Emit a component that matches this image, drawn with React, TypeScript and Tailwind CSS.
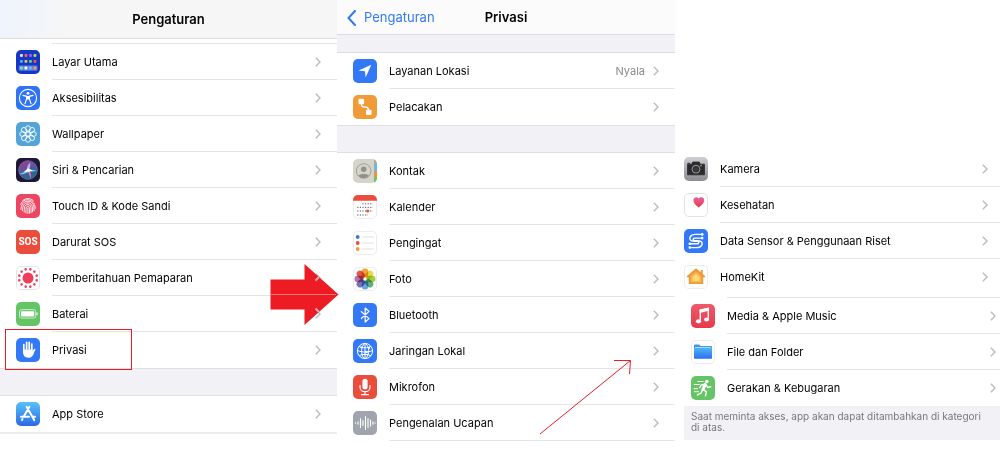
import type { ReactNode } from "react";

function Tile({ className, children }: { className: string; children?: ReactNode }) {
  return (
    <span
      className={`flex h-6 w-6 shrink-0 items-center justify-center overflow-hidden rounded-[5px] ${className}`}
    >
      {children}
    </span>
  );
}

function Glyph({ children }: { children: ReactNode }) {
  return (
    <svg className="h-6 w-6 shrink-0" viewBox="0 0 24 24" fill="none" aria-hidden="true">
      {children}
    </svg>
  );
}

function Chevron() {
  return (
    <svg className="h-[10px] w-[6px] shrink-0" viewBox="0 0 6 10" fill="none" aria-hidden="true">
      <path d="M0.8 0.7 5 5 0.8 9.3" stroke="#bcbcc0" strokeWidth="1.4" />
    </svg>
  );
}

const homeDots = [
  ["#e8e3dc", "#f0645a", "#a45cf0", "#b9d84a"],
  ["#4db4f5", "#f5c33c", "#5fd67e", "#f05a3c"],
  ["#7fe08a", "#ffffff", "#5cc3f5", "#f59a4a"],
];

function HomeScreenIcon() {
  return (
    <Tile className="bg-[#1437c8]">
      <Glyph>
        <rect x="2.8" y="15.6" width="18.6" height="5.2" rx="1.2" fill="#5f7fe8" />
        {homeDots.map((row, y) =>
          row.map((color, x) => (
            <rect
              key={`${x}-${y}`}
              x={4 + x * 4.5}
              y={4 + y * 6.3 - (y === 1 ? 0.4 : 0)}
              width="2.9"
              height="2.9"
              rx="0.8"
              fill={color}
            />
          ))
        )}
      </Glyph>
    </Tile>
  );
}

function AccessibilityIcon() {
  return (
    <Tile className="bg-[#2f73f6]">
      <Glyph>
        <circle cx="12" cy="12" r="8.6" stroke="#fff" strokeWidth="1.1" />
        <circle cx="12" cy="7.3" r="1.4" fill="#fff" />
        <path
          d="M7 9.4 10.6 10.3V13L9 17.6M17 9.4 13.4 10.3V13L15 17.6"
          stroke="#fff"
          strokeWidth="1.2"
          strokeLinecap="round"
        />
        <path d="M10.4 10h3.2v3.6h-3.2z" fill="#fff" />
      </Glyph>
    </Tile>
  );
}

const eighths = [0, 45, 90, 135, 180, 225, 270, 315];

function WallpaperIcon() {
  return (
    <Tile className="bg-[#53a5d9]">
      <Glyph>
        <circle cx="12" cy="12" r="2.2" stroke="#fff" strokeWidth="1" />
        {eighths.map((a) => (
          <ellipse
            key={a}
            cx="12"
            cy="6.6"
            rx="2.4"
            ry="2.9"
            stroke="#fff"
            strokeWidth="0.9"
            transform={`rotate(${a} 12 12)`}
          />
        ))}
      </Glyph>
    </Tile>
  );
}

function SiriIcon() {
  return (
    <Tile className="bg-[#1d1738]">
      <Glyph>
        <defs>
          <linearGradient id="siri" x1="7" y1="4" x2="15" y2="20" gradientUnits="userSpaceOnUse">
            <stop stopColor="#a03a86" />
            <stop offset="0.45" stopColor="#5a55a8" />
            <stop offset="1" stopColor="#156f86" />
          </linearGradient>
        </defs>
        <circle cx="12" cy="12" r="9.3" fill="url(#siri)" stroke="#77719c" strokeWidth="0.8" />
        <path d="M3.400 15.800C7 15.300 9.500 13 12 11.200c2.500.6 5.300 1.200 8.300 1.400-3 1.400-5.600 1-7.300.8-3 1.400-6.500 4-9.600 2.400z" fill="#6fe6e6" />
        <path d="M11 12c-.3-2.500.6-5.500 3.300-7.500.3 3-.6 5.500-1.300 7.500z" fill="#b9b4e6" />
        <path d="M11.300 12.400c1.200 2.500 2.400 5 3.400 8 .9-2.400.1-5.500-1.400-8.200z" fill="#f06cc0" />
        <path d="M8 13.800 12 10.200l4.500 2.300-3.800 1.300z" fill="#fff" />
      </Glyph>
    </Tile>
  );
}

function TouchIdIcon() {
  return (
    <Tile className="bg-[#ee4560]">
      <Glyph>
        <g stroke="#fff" strokeWidth="0.9" strokeLinecap="round">
          <path d="M6.600 6.800C9.600 3.700 14.400 3.700 17.400 6.800" />
          <path d="M4.700 10.300C6.500 5.700 12 4.500 15.800 7.200c2.400 1.700 3.500 4.200 3.500 7.300" />
          <path d="M4.900 15.500c.4-4.700 2-8.200 7.100-8.200 4 0 6 3.200 6 7.500v1.900" />
          <path d="M6.500 16.800C6.500 12 7.700 8.900 12 8.900c3.200 0 4.500 2.600 4.500 6.100v2.900" />
          <path d="M8.200 18c.3-3.800-.3-7.400 3.800-7.400 2.400 0 3 2 3 4.600v3.500" />
          <path d="M9.900 19c.3-3.500-.3-6.700 2.100-6.700 1.400 0 1.500 1.400 1.500 3.100v3.900" />
          <path d="M11.900 14v5.500" />
        </g>
      </Glyph>
    </Tile>
  );
}

function SosIcon() {
  return (
    <Tile className="bg-[#eb4d3d]">
      <span className="font-['Roboto',sans-serif] text-[10px] leading-3 font-bold text-white">
        SOS
      </span>
    </Tile>
  );
}

function ExposureIcon() {
  return (
    <Tile className="bg-white ring-1 ring-[#e6e6e8] ring-inset">
      <Glyph>
        <circle cx="12" cy="12" r="5.5" fill="#eb3f5b" />
        {[15, 45, 75, 105, 135, 165, 195, 225, 255, 285, 315, 345].map((a) => (
          <circle key={a} cx="12" cy="3" r="1.3" fill="#eb3f5b" transform={`rotate(${a} 12 12)`} />
        ))}
      </Glyph>
    </Tile>
  );
}

function BatteryIcon() {
  return (
    <Tile className="bg-[#65c466]">
      <Glyph>
        <rect x="3.5" y="7.7" width="16.2" height="8.4" rx="2" stroke="#d9f2d9" strokeWidth="0.9" />
        <rect x="5" y="9.2" width="13.2" height="5.4" rx="0.8" fill="#fff" />
        <path d="M21 10.500v2.800" stroke="#fff" strokeWidth="1.1" />
      </Glyph>
    </Tile>
  );
}

function HandIcon() {
  return (
    <Tile className="bg-[#3378f6]">
      <Glyph>
        <g stroke="#fff" strokeWidth="1.7" strokeLinecap="round">
          <path d="M7.800 13V6.500M10.600 11V4.300M13.200 11V4.300M15.800 12V6.200M18.700 11.600 16 15.500" />
        </g>
        <path d="M7 11.500h9.600v2.700l1.800-.8c-.8 3.600-2.400 6.400-6.200 6.400-3.700 0-5.200-2.800-5.200-6z" fill="#fff" />
      </Glyph>
    </Tile>
  );
}

function AppStoreIcon() {
  return (
    <Tile className="bg-linear-to-b from-[#5bc1f8] to-[#2e68e3]">
      <Glyph>
        <g stroke="#fff" strokeWidth="2" strokeLinecap="round">
          <path d="M13.300 4.900 7.600 14.700M10.700 4.900l6.700 11.700M5 14.700h8M16.600 14.700H19M6.500 17.100l-.5.900M17.700 17.300l.5.800" />
        </g>
      </Glyph>
    </Tile>
  );
}

function LocationIcon() {
  return (
    <Tile className="bg-[#3378f6]">
      <Glyph>
        <path d="M18.300 5.700 12.600 18.600 12 12.300 5.500 11.600z" fill="#fff" />
      </Glyph>
    </Tile>
  );
}

function TrackingIcon() {
  return (
    <Tile className="bg-[#f09a38]">
      <Glyph>
        <rect x="5.5" y="3.8" width="5.6" height="5.4" rx="1" fill="#fff" />
        <rect x="13" y="14.7" width="5.6" height="5.4" rx="1" fill="#fff" />
        <path d="M8.500 9c0 2.500.5 3 3 3s4 .4 4 3" stroke="#fff" strokeWidth="1.4" />
      </Glyph>
    </Tile>
  );
}

function ContactsIcon() {
  return (
    <Tile className="bg-[#d5d4c9]">
      <Glyph>
        <path d="M21 0h3v6h-3z" fill="#a9a79e" />
        <path d="M21 6h3v6h-3z" fill="#62b9f2" />
        <path d="M21 12h3v6h-3z" fill="#f0913a" />
        <path d="M21 18h3v6h-3z" fill="#61c95f" />
        <circle cx="10.7" cy="12" r="7.3" stroke="#9c9a93" strokeWidth="0.9" />
        <circle cx="10.7" cy="10.2" r="2.7" fill="#94918b" />
        <path d="M5.500 16.700c1-2.300 9.400-2.300 10.400 0-2.300 3.200-8.100 3.200-10.400 0z" fill="#94918b" />
      </Glyph>
    </Tile>
  );
}

function CalendarIcon() {
  return (
    <Tile className="bg-white ring-1 ring-[#ececee] ring-inset">
      <Glyph>
        <path d="M0 0h24v5.700H0z" fill="#eb4d3d" />
        <g stroke="#55555a" strokeWidth="1" strokeDasharray="1.2 1.4">
          <path d="M9.400 8.800H20M4.200 12.300H20M4.200 16H20M4.200 20H15" />
        </g>
        <circle cx="14.7" cy="16" r="1.6" fill="#eb4d3d" />
      </Glyph>
    </Tile>
  );
}

function RemindersIcon() {
  return (
    <Tile className="bg-white ring-1 ring-[#ececee] ring-inset">
      <Glyph>
        <path d="M9 6h12M9 12h12M9 18h12" stroke="#dededf" strokeWidth="0.9" />
        <circle cx="4.7" cy="6" r="1.9" fill="#3378f6" />
        <circle cx="4.7" cy="12" r="1.9" fill="#eb4d3d" />
        <circle cx="4.7" cy="18" r="1.9" fill="#f09a38" />
      </Glyph>
    </Tile>
  );
}

const petals = [
  "#f2a13a",
  "#e5dc3f",
  "#a9cc4e",
  "#62b08a",
  "#6ba3dc",
  "#7c72b8",
  "#b673a8",
  "#e0574b",
];

function PhotosIcon() {
  return (
    <Tile className="bg-white ring-1 ring-[#ececee] ring-inset">
      <Glyph>
        {petals.map((color, i) => (
          <rect
            key={color}
            x="8.7"
            y="1.5"
            width="6.6"
            height="9"
            rx="3.3"
            fill={color}
            className="mix-blend-multiply"
            transform={`rotate(${i * 45} 12 12)`}
          />
        ))}
      </Glyph>
    </Tile>
  );
}

function BluetoothIcon() {
  return (
    <Tile className="bg-[#3378f6]">
      <Glyph>
        <path
          d="M8 8.300 16 15.600 12.200 19V5l3.800 3.400L8 15.700"
          stroke="#fff"
          strokeWidth="1.2"
          strokeLinejoin="round"
        />
      </Glyph>
    </Tile>
  );
}

function GlobeIcon() {
  return (
    <Tile className="bg-[#3378f6]">
      <Glyph>
        <g stroke="#fff" strokeWidth="1">
          <circle cx="12" cy="12" r="7.6" />
          <path d="M4.400 11.500C9 13.500 15 13.500 19.600 11.500M6 7.300c4 2 8 2 12 0M6 16.700c4-1.800 8-1.800 12 0" />
          <path d="M11.500 4.400C8 8 7.500 15 11 19.500M12.500 4.400c4 3.600 4.500 10.600 0 15.200M12 4.400v15.200" />
        </g>
        <circle cx="13.5" cy="13" r="1.3" fill="#fff" />
        <circle cx="8.5" cy="8.5" r="1.1" fill="#fff" />
        <circle cx="16" cy="9" r="1.1" fill="#fff" />
      </Glyph>
    </Tile>
  );
}

function MicIcon() {
  return (
    <Tile className="bg-[#eb4d3d]">
      <Glyph>
        <rect x="9.4" y="3.7" width="5.2" height="10.6" rx="2.6" fill="#fff" />
        <path
          d="M7 10.500v1.700c0 6 10 6 10 0v-1.700M12 16.700v3M8.500 19.700h7"
          stroke="#fff"
          strokeWidth="1.2"
          strokeLinecap="round"
        />
      </Glyph>
    </Tile>
  );
}

function SpeechIcon() {
  return (
    <Tile className="bg-[#9fa4ae]">
      <Glyph>
        <path
          d="M2.500 11.700v.6M5 10.700v2.600M7.500 7.500v9M10 9.500v5M12.500 5.500v13M15 7.500v9M17.500 9v6M20 10.700v2.600M22 11.700v.6"
          stroke="#fff"
          strokeWidth="1.1"
          strokeLinecap="round"
        />
      </Glyph>
    </Tile>
  );
}

function CameraIcon() {
  return (
    <Tile className="bg-linear-to-b from-[#cfcfd3] to-[#8c8c91]">
      <Glyph>
        <path
          d="M3.500 7.200h4.300l.9-2.200h6.600l.9 2.200h4.300v10.600h-17z"
          fill="#2b2b2d"
          stroke="#2b2b2d"
          strokeWidth="0.8"
          strokeLinejoin="round"
        />
        <path d="M3.500 6.300h2.700" stroke="#2b2b2d" />
        <circle cx="12" cy="12.2" r="3.9" stroke="#a9a9ac" strokeWidth="0.9" />
        <circle cx="12" cy="12.2" r="2.2" fill="#3a3a3e" />
        <circle cx="17" cy="8.7" r="0.8" fill="#e3b341" />
      </Glyph>
    </Tile>
  );
}

function HealthIcon() {
  return (
    <Tile className="bg-white ring-1 ring-[#e3e3e6] ring-inset">
      <Glyph>
        <defs>
          <linearGradient id="heart" x1="0" y1="4" x2="0" y2="15" gradientUnits="userSpaceOnUse">
            <stop stopColor="#e85fa8" />
            <stop offset="1" stopColor="#ee3a3a" />
          </linearGradient>
        </defs>
        <path
          d="M14.700 14.600C11.500 12 9.400 10.200 9.400 7.300c0-3.300 3.900-4.200 5.300-1.700 1.400-2.500 5.500-1.600 5.500 1.700 0 2.900-2.300 4.700-5.500 7.300z"
          fill="url(#heart)"
        />
      </Glyph>
    </Tile>
  );
}

function SensorIcon() {
  return (
    <Tile className="bg-[#3378f6]">
      <Glyph>
        <g stroke="#fff" strokeWidth="1.4" strokeLinecap="round">
          <path d="M17.800 5.400H11C6.300 5.400 4.200 10 7.200 11.600c1.300.7 4.300.5 6.300.7 1.800.2 1.800 2.400 0 2.500H5.800" />
          <path d="M6.200 18.600H13c4.700 0 6.800-4.600 3.800-6.200-1.300-.7-4.300-.5-6.300-.7-1.800-.2-1.800-2.500 0-2.600h7.700" />
        </g>
        <circle cx="18.2" cy="5.4" r="1.3" fill="#fff" />
        <circle cx="18.2" cy="9.1" r="1.3" fill="#fff" />
        <circle cx="5.8" cy="18.6" r="1.3" fill="#fff" />
        <circle cx="5.8" cy="14.8" r="1.3" fill="#fff" />
      </Glyph>
    </Tile>
  );
}

function HomeKitIcon() {
  return (
    <Tile className="bg-white ring-1 ring-[#ececee] ring-inset">
      <Glyph>
        <path d="M16.700 5h2v5h-2z" fill="#f09a38" />
        <path d="M12 3.200 21 11v1.200h-1.800V19H4.800v-6.800H3V11z" fill="#ee9838" />
        <path d="M12 6.400 17.300 11v6.600H6.700V11z" fill="#f5b84d" />
        <path d="M12 9 15.300 12v4H8.700v-4z" fill="#f9d97a" />
      </Glyph>
    </Tile>
  );
}

function MusicIcon() {
  return (
    <Tile className="bg-linear-to-b from-[#ee5a6b] to-[#e5394a]">
      <Glyph>
        <path d="M9.300 16V6.300l8-1.800v9.800" stroke="#fff" strokeWidth="1.4" />
        <path d="M8.600 5.600 18 3.600v3.200L8.600 8.900z" fill="#fff" />
        <ellipse cx="7.5" cy="17.3" rx="2.6" ry="2.1" fill="#fff" />
        <ellipse cx="15.6" cy="15.5" rx="2.5" ry="2.1" fill="#fff" />
      </Glyph>
    </Tile>
  );
}

function FilesIcon() {
  return (
    <Tile className="bg-white ring-1 ring-[#ececee] ring-inset">
      <Glyph>
        <defs>
          <linearGradient id="folder" x1="0" y1="7" x2="0" y2="19" gradientUnits="userSpaceOnUse">
            <stop stopColor="#55b9f7" />
            <stop offset="1" stopColor="#2a6ff0" />
          </linearGradient>
        </defs>
        <path d="M3 5.500c0-.6.300-.9.900-.9h4.300l1.400 1.400H20c.700 0 1 .300 1 1V10H3z" fill="#3a9ce8" />
        <path d="M4 7h16v2H4z" fill="#a5dbfa" />
        <path d="M3 8h18v9.800c0 .700-.300 1-1 1H4c-.700 0-1-.300-1-1z" fill="url(#folder)" />
      </Glyph>
    </Tile>
  );
}

function FitnessIcon() {
  return (
    <Tile className="bg-[#65c466]">
      <Glyph>
        <circle cx="15.8" cy="5.5" r="1.8" fill="#fff" />
        <path d="M14.200 8.500 12 13.300" stroke="#fff" strokeWidth="3" strokeLinecap="round" />
        <path
          d="M14 8.300 10.200 9 8.800 11.500M15 9l1.800 2.500 2.900-.8M12.300 13.500l3 2.300-.8 4M11.600 13.500l-1.600 3.600-3.600 1.800"
          stroke="#fff"
          strokeWidth="1.5"
          strokeLinecap="round"
          strokeLinejoin="round"
        />
        <path
          d="M7 5.500h5M3.200 8.500h5M3 12.700h3.500M3.500 15.700h4"
          stroke="#fff"
          strokeWidth="1"
          strokeLinecap="round"
        />
      </Glyph>
    </Tile>
  );
}

type RowProps = {
  icon: ReactNode;
  label: string;
  value?: string;
  inset?: string;
  end?: string;
  line?: boolean;
};

function Row({ icon, label, value, inset = "pl-4", end = "pr-4", line = true }: RowProps) {
  return (
    <li>
      <a href="#" className={`flex h-9 items-center gap-3 ${inset}`}>
        {icon}
        <span
          className={`flex h-full flex-1 items-center justify-between border-b ${end} ${
            line ? "border-[#e4e4e6]" : "border-transparent"
          }`}
        >
          <span className="pt-0.5 whitespace-nowrap">{label}</span>
          <span className="flex items-center gap-2 text-[#8a8a8e]">
            {value && <span className="pt-0.5">{value}</span>}
            <Chevron />
          </span>
        </span>
      </a>
    </li>
  );
}

function SettingsPanel() {
  return (
    <section className="relative" aria-label="Pengaturan">
      <header className="flex h-[39px] items-center justify-center border-b border-[#dcdcde] bg-linear-to-r from-[#eef4fc] to-[#f6f6f6] to-20% pt-0.5">
        <h1 className="text-[13px] font-semibold">Pengaturan</h1>
      </header>
      <div className="ml-[52px] h-[5px] border-b border-[#e4e4e6]" />
      <ul>
        <Row icon={<HomeScreenIcon />} label="Layar Utama" />
        <Row icon={<AccessibilityIcon />} label="Aksesibilitas" />
        <Row icon={<WallpaperIcon />} label="Wallpaper" />
        <Row icon={<SiriIcon />} label="Siri & Pencarian" />
        <Row icon={<TouchIdIcon />} label="Touch ID & Kode Sandi" />
        <Row icon={<SosIcon />} label="Darurat SOS" />
        <Row icon={<ExposureIcon />} label="Pemberitahuan Pemaparan" />
        <Row icon={<BatteryIcon />} label="Baterai" />
        <Row icon={<HandIcon />} label="Privasi" line={false} />
      </ul>
      <div className="h-7 border-y border-[#e0e0e4] bg-[#f1f1f6]" />
      <ul>
        <Row icon={<AppStoreIcon />} label="App Store" line={false} />
      </ul>
      <div className="h-[2px] bg-[#ededf1]" />

      {/* highlight around the Privasi row */}
      <div className="absolute top-[329px] left-[5px] h-[41px] w-[127px] ring-1 ring-[#ed1c24] ring-inset" />

      {/* step arrow to the next panel */}
      <svg
        className="absolute top-[263px] right-[-2px] z-10 h-[63px] w-[69px]"
        viewBox="0 0 69 63"
        aria-hidden="true"
      >
        <path d="M0.500 16.500H34.500V1L68.500 31.500 34.500 62V46.500H0.500z" fill="#ed1c24" />
        <path d="M0 31.500H66" stroke="#f08a8e" strokeWidth="0.8" />
        <path d="M45.500 17.500 49 14M45.500 45.500 49 49" stroke="#c9b8ba" strokeWidth="1.8" />
      </svg>
    </section>
  );
}

function PrivacyPanel() {
  return (
    <section className="relative" aria-label="Privasi">
      <header className="grid h-[34px] grid-cols-3 items-center bg-[#fbfbfc] pt-0.5 text-[13px]">
        <a href="#" className="flex items-center gap-2 pl-[10px] text-[#3378f6]">
          <svg className="h-4 w-[9px] shrink-0" viewBox="0 0 9 16" fill="none" aria-hidden="true">
            <path d="M8 1 1.500 8 8 15" stroke="currentColor" strokeWidth="2" strokeLinecap="round" />
          </svg>
          Pengaturan
        </a>
        <h2 className="text-center font-semibold">Privasi</h2>
      </header>
      <div className="h-[19px] border-y border-[#dcdce0] bg-[#f1f1f6]" />
      <ul>
        <Row icon={<LocationIcon />} label="Layanan Lokasi" value="Nyala" />
        <Row icon={<TrackingIcon />} label="Pelacakan" line={false} />
      </ul>
      <div className="h-7 border-y border-[#e0e0e4] bg-[#f1f1f6]" />
      <ul>
        <Row icon={<ContactsIcon />} label="Kontak" />
        <Row icon={<CalendarIcon />} label="Kalender" />
        <Row icon={<RemindersIcon />} label="Pengingat" />
        <Row icon={<PhotosIcon />} label="Foto" />
        <Row icon={<BluetoothIcon />} label="Bluetooth" />
        <Row icon={<GlobeIcon />} label="Jaringan Lokal" />
        <Row icon={<MicIcon />} label="Mikrofon" />
        <Row icon={<SpeechIcon />} label="Pengenalan Ucapan" />
      </ul>

      {/* pointer to the Jaringan Lokal chevron */}
      <svg
        className="absolute top-[359px] right-[43px] h-[76px] w-[93px]"
        viewBox="0 0 93 76"
        fill="none"
        aria-hidden="true"
      >
        <path d="M1 75 91.500 1.500M75 1.500H91.500L90.500 15" stroke="#ed1c24" />
      </svg>
    </section>
  );
}

function AppsPanel() {
  return (
    <section className="ml-[9px] pt-[151px]" aria-label="Kategori akses">
      <ul>
        <Row icon={<CameraIcon />} label="Kamera" inset="pl-0" end="pr-3" />
        <Row icon={<HealthIcon />} label="Kesehatan" inset="pl-0" end="pr-3" />
        <Row
          icon={<SensorIcon />}
          label="Data Sensor & Penggunaan Riset"
          inset="pl-0"
          end="pr-3"
        />
        <Row icon={<HomeKitIcon />} label="HomeKit" inset="pl-0" end="pr-3" line={false} />
      </ul>
      <div className="ml-[43px] h-[3px] border-b border-[#e4e4e6]" />
      <ul>
        <Row icon={<MusicIcon />} label="Media & Apple Music" inset="pl-[7px]" end="pr-1" />
        <Row icon={<FilesIcon />} label="File dan Folder" inset="pl-[7px]" end="pr-1" />
        <Row
          icon={<FitnessIcon />}
          label="Gerakan & Kebugaran"
          inset="pl-[7px]"
          end="pr-1"
          line={false}
        />
      </ul>
      <p className="bg-[#f1f1f6] pt-[5px] pr-3 pb-[7px] pl-[7px] text-[10px] leading-[11px] text-[#77777c]">
        Saat meminta akses, app akan dapat ditambahkan di kategori di atas.
      </p>
    </section>
  );
}

export default function App() {
  return (
    <main className="grid grid-cols-[337fr_338fr_325fr] items-start bg-white font-['Inter',sans-serif] text-[11px] text-black">
      <SettingsPanel />
      <PrivacyPanel />
      <AppsPanel />
    </main>
  );
}
